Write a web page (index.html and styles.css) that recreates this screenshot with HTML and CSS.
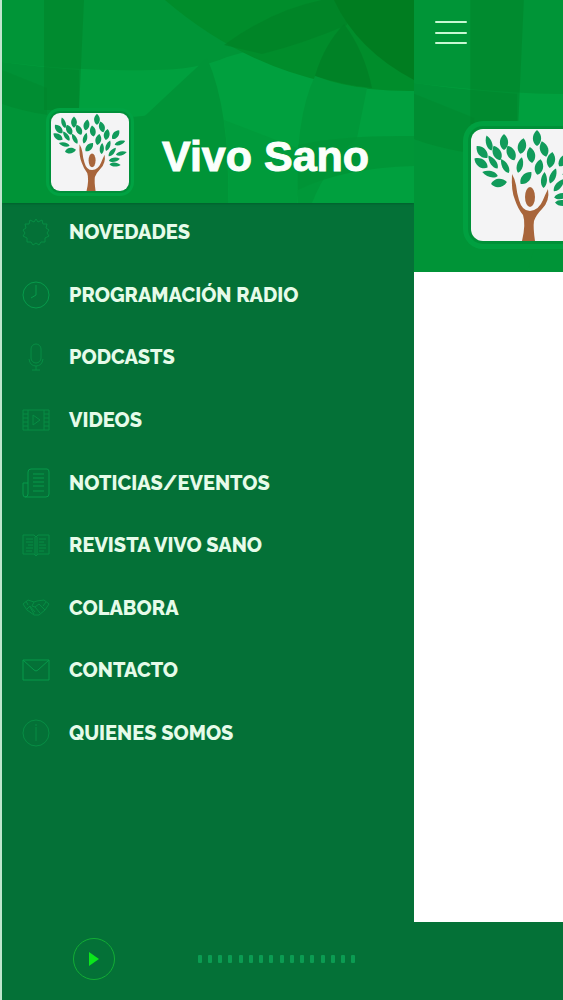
FILE: index.html
```html
<!DOCTYPE html>
<html lang="es">
<head>
<meta charset="utf-8">
<meta name="viewport" content="width=device-width, initial-scale=1">
<title>Vivo Sano</title>
<link rel="stylesheet" href="styles.css">
</head>
<body>
<svg class="defs" aria-hidden="true">
  <defs>
    <symbol id="leaves" viewBox="0 0 412 203" preserveAspectRatio="xMinYMin slice">
      <rect width="412" height="203" fill="#00a03e"/>
      <path d="M0 0H345V25Q290 38 225 57Q195 70 150 70Q80 72 0 62Z" fill="#009537"/>
      <path d="M0 62Q45 68 77 70V112L45 122Q20 112 0 104Z" fill="#009236"/>
      <path d="M0 70L45 88V122Q20 112 0 108Z" fill="#008b31" opacity=".6"/>
      <path d="M0 104Q60 125 150 115Q95 160 85 203H0Z" fill="#009437"/>
      <path d="M42 0H82L77 110H42Z" fill="#008329" opacity=".55"/>
      <path d="M205 58Q165 95 128 130Q90 170 85 203H226Q228 110 205 58Z" fill="#009437"/>
      <path d="M226 203Q228 160 222 120L300 150L295 203Z" fill="#009b3b"/>
      <path d="M163 0Q270 92 412 91V0Z" fill="#008d2b"/>
      <path d="M222 45Q270 10 320 0H345V25Q300 44 260 54Z" fill="#008127" opacity=".7"/>
      <path d="M332 0Q355 50 412 80V0Z" fill="#007d20"/>
      <path d="M342 24Q362 50 370 88Q340 85 313 76Q322 45 342 24Z" fill="#008026" opacity=".8"/>
      <path d="M313 76Q340 86 365 88L355 138Q325 165 310 203H296Q292 120 313 76Z" fill="#009839"/>
      <path d="M296 145Q340 135 412 136V166Q340 168 296 190Z" fill="#009336" opacity=".8"/>
    </symbol>
    <symbol id="tree" viewBox="0 0 112 112">
      <defs>
        <path id="leaf" d="M0 -8C6 -3 5 5 0 8C-5 5 -6 -3 0 -8"/>
        <path id="slim" d="M0 -8C4 -3 4 5 0 8C-4 5 -4 -3 0 -8"/>
      </defs>
      <g fill="#119b5b">
        <use href="#leaf" transform="translate(66 9)"/>
        <use href="#leaf" transform="translate(11 23) rotate(-42)"/>
        <use href="#slim" transform="translate(18 14) rotate(-18)"/>
        <use href="#leaf" transform="translate(33 13)"/>
        <use href="#leaf" transform="translate(26 24) rotate(-25)"/>
        <use href="#leaf" transform="translate(40 24) rotate(-25)"/>
        <use href="#leaf" transform="translate(51 17) rotate(12)"/>
        <use href="#leaf" transform="translate(10 34) rotate(-55)"/>
        <use href="#slim" transform="translate(22 33) rotate(-35)"/>
        <use href="#slim" transform="translate(34 37) rotate(-28)"/>
        <use href="#slim" transform="translate(49 36) rotate(14)"/>
        <use href="#slim" transform="translate(19 45) rotate(-76)"/>
        <use href="#leaf" transform="translate(28 54) rotate(82)"/>
        <use href="#leaf" transform="translate(55 49) rotate(42)"/>
        <use href="#leaf" transform="translate(60 26) rotate(-8)"/>
        <use href="#leaf" transform="translate(73 20) rotate(-16)"/>
        <use href="#leaf" transform="translate(68 38) rotate(12)"/>
        <use href="#leaf" transform="translate(80 31) rotate(10)"/>
        <use href="#slim" transform="translate(73 51) rotate(4)"/>
        <use href="#slim" transform="translate(82 47) rotate(22)"/>
        <use href="#leaf" transform="translate(93 31) rotate(38)"/>
        <use href="#slim" transform="translate(99 43) rotate(70)"/>
        <use href="#slim" transform="translate(88 56) rotate(40)"/>
        <use href="#slim" transform="translate(101 58) rotate(76)"/>
        <use href="#slim" transform="translate(91 67) rotate(80)"/>
        <use href="#slim" transform="translate(92 74) rotate(94)"/>
      </g>
      <g fill="#a8653b">
        <ellipse cx="59" cy="68" rx="5" ry="10"/>
        <path d="M41 45Q40 62 44 71Q47 80 52 86Q55 95 51 112H64Q62 98 63 92Q65 86 71 80Q79 72 77 60Q74 66 72 71Q68 81 59 82Q51 82 48 71Q46 65 45 56Q44 50 41 45Z"/>
      </g>
    </symbol>
  </defs>
</svg>

<div class="app">
  <nav class="drawer" aria-label="Menú principal">
    <header class="banner banner-drawer">
      <svg class="banner-art" aria-hidden="true"><use href="#leaves"/></svg>
      <svg class="logo logo-small" role="img" aria-label="Árbol Vivo Sano"><use href="#tree"/></svg>
      <h1 class="brand">Vivo Sano</h1>
    </header>
    <ul class="menu">
      <li><a class="item" href="#novedades">
        <svg class="icon" viewBox="0 0 28 28"><path d="M14 1l2 3 4-2 1 4 4 0-1 4 3 2-2 3 2 3-4 2 0 4-4 0-2 3-3-2-3 2-2-3-4 0 0-4-4-2 2-3-2-3 3-2-1-4 4 0 1-4 4 2Z"/></svg>
        NOVEDADES</a></li>
      <li><a class="item" href="#programacion">
        <svg class="icon bright" viewBox="0 0 28 28"><circle cx="14" cy="14" r="13"/><path d="M14 4V14L9 17"/></svg>
        PROGRAMACIÓN RADIO</a></li>
      <li><a class="item" href="#podcasts">
        <svg class="icon" viewBox="0 0 28 28"><rect x="9" y="1" width="10" height="19" rx="5"/><path d="M7 16Q8 23 14 23T21 16M14 23V27M10 27H18"/></svg>
        PODCASTS</a></li>
      <li><a class="item" href="#videos">
        <svg class="icon" viewBox="0 0 28 28"><path d="M1 4H27V24H1ZM6 4V24M22 4V24M1 8H6M1 12H6M1 16H6M1 20H6M22 8H27M22 12H27M22 16H27M22 20H27M11 9V19L18 14Z"/></svg>
        VIDEOS</a></li>
      <li><a class="item" href="#noticias">
        <svg class="icon bright" viewBox="0 0 28 28"><path d="M6 25V3Q6 0 9 0H25Q27 0 27 3V25Q27 28 24 28H3Q1 28 1 25V14H6M6 25Q6 28 3 28M11 5H22M11 9H22M11 13H22M11 17H22M11 22H22"/></svg>
        NOTICIAS/EVENTOS</a></li>
      <li><a class="item" href="#revista">
        <svg class="icon" viewBox="0 0 28 28"><path d="M1 4H12L14 6L16 4H27V23H16L14 25L12 23H1ZM13 6V24M15 6V24M4 8H11M4 11H11M6 14H11M4 17H11M4 20H10M17 8H24M17 11H22M17 14H24M17 17H24M17 20H22"/></svg>
        REVISTA VIVO SANO</a></li>
      <li><a class="item" href="#colabora">
        <svg class="icon" viewBox="0 0 28 28"><path d="M1 10L6 6L12 8L15 7L22 6L27 10L23 16L17 21H12L5 16ZM5 15L8 12L13 18M8 13L12 20M12 8L10 12L13 13L17 10L23 16M13 13L18 19M4 7L6 11M24 8L21 12"/></svg>
        COLABORA</a></li>
      <li><a class="item" href="#contacto">
        <svg class="icon bright" viewBox="0 0 28 28"><path d="M1 4H27V24H1ZM1 4L12 14Q14 16 16 14L27 4"/></svg>
        CONTACTO</a></li>
      <li><a class="item" href="#quienes">
        <svg class="icon" viewBox="0 0 28 28"><circle cx="14" cy="14" r="13"/><path d="M14 5V7M14 8V22"/></svg>
        QUIENES SOMOS</a></li>
    </ul>
  </nav>
  <main class="page">
    <header class="banner banner-page">
      <svg class="banner-art" aria-hidden="true"><use href="#leaves"/></svg>
      <button class="burger" type="button" aria-label="Abrir menú"><span></span><span></span><span></span></button>
      <svg class="logo logo-large" role="img" aria-label="Árbol Vivo Sano"><use href="#tree"/></svg>
    </header>
  </main>
</div>

<footer class="player">
  <button class="play" type="button" aria-label="Reproducir">
    <svg viewBox="0 0 12 14" aria-hidden="true"><path d="M1 0L11 7L1 14Z"/></svg>
  </button>
  <div class="levels" aria-hidden="true">
    <div class="group"><i></i><i></i><i></i><i></i></div>
    <div class="group"><i></i><i></i><i></i><i></i></div>
    <div class="group"><i></i><i></i><i></i><i></i></div>
    <div class="group"><i></i><i></i><i></i><i></i></div>
  </div>
</footer>
</body>
</html>
```
FILE: styles.css
```css
* {
  box-sizing: border-box;
}

body {
  display: flex;
  flex-direction: column;
  min-height: 100vh;
  margin: 0;
  border-left: 2px solid #bfe5cd;
  background: #047137;
  font-family: Raleway, Lato, sans-serif;
  overflow-x: hidden;
}

.defs {
  position: absolute;
  width: 0;
  height: 0;
}

.app {
  display: flex;
  flex: 1;
}

.drawer {
  flex: 0 0 auto;
  width: min(412px, 80%);
}

.banner {
  position: relative;
  display: flex;
  overflow: hidden;
  background: #00983a;
}

.banner-art {
  position: absolute;
  inset: 0;
  width: 100%;
  height: 100%;
}

.banner-drawer {
  align-items: flex-end;
  gap: 33px;
  height: 203px;
  padding: 0 32px 12px 49px;
  box-shadow: 0 1px 2px #00602c;
}

.logo {
  position: relative;
  flex: none;
  background: #f4f4f5;
}

.logo-small {
  width: 78px;
  height: 78px;
  border-radius: 9px;
  box-shadow: 0 0 0 2px #00903a, 0 0 0 5px #00a242;
}

.logo-large {
  width: 112px;
  height: 112px;
  border-radius: 12px;
  box-shadow: 0 0 0 3px #009038, 0 0 0 8px #00a040;
}

.brand {
  position: relative;
  margin: 0 0 11px;
  color: #fbfffb;
  font: bold 43px/48px "Liberation Sans", Arial, sans-serif;
  white-space: nowrap;
  -webkit-text-stroke: 1px #fbfffb;
  stroke-linejoin: round;
}

.menu {
  display: flex;
  flex-direction: column;
  justify-content: space-between;
  min-height: 559px;
  margin: 0;
  padding: 0;
  list-style: none;
}

.item {
  display: flex;
  align-items: center;
  gap: 19px;
  height: 58px;
  padding-left: 20px;
  color: #e6fbe9;
  font-size: 20px;
  font-weight: 800;
  line-height: 24px;
  text-decoration: none;
  white-space: nowrap;
}

.icon {
  flex: none;
  width: 28px;
  height: 28px;
  overflow: visible;
  fill: none;
  stroke: #078d44;
  stroke-width: 1;
}

.icon.bright {
  stroke: #079a4b;
}

.page {
  flex: 1;
  min-width: 0;
  overflow: hidden;
  background: #fff;
}

.banner-page {
  flex-direction: column;
  height: 272px;
  padding: 17px 0 0 17px;
}

.burger {
  position: relative;
  display: flex;
  flex-direction: column;
  justify-content: space-between;
  width: 40px;
  height: 31px;
  padding: 4px;
  border: 0;
  background: none;
}

.burger span {
  height: 2px;
  border-radius: 1px;
  background: #c8f8d2;
}

.banner-page .logo {
  margin: 81px 0 0 40px;
}

.player {
  display: flex;
  align-items: center;
  gap: 83px;
  height: 78px;
  padding: 0 71px;
}

.play {
  display: grid;
  place-items: center;
  width: 42px;
  height: 42px;
  margin-top: -4px;
  padding: 0;
  border: 1px solid #12ad35;
  border-radius: 50%;
  background: none;
}

.play svg {
  width: 12px;
  height: 14px;
  fill: #0be61c;
}

.levels,
.group {
  display: flex;
}

.levels {
  gap: 7px;
  margin-top: -4px;
}

.group {
  gap: 6px;
}

.group i {
  width: 4px;
  height: 8px;
  border-radius: 1px;
  background: #0b9c52;
}
```
